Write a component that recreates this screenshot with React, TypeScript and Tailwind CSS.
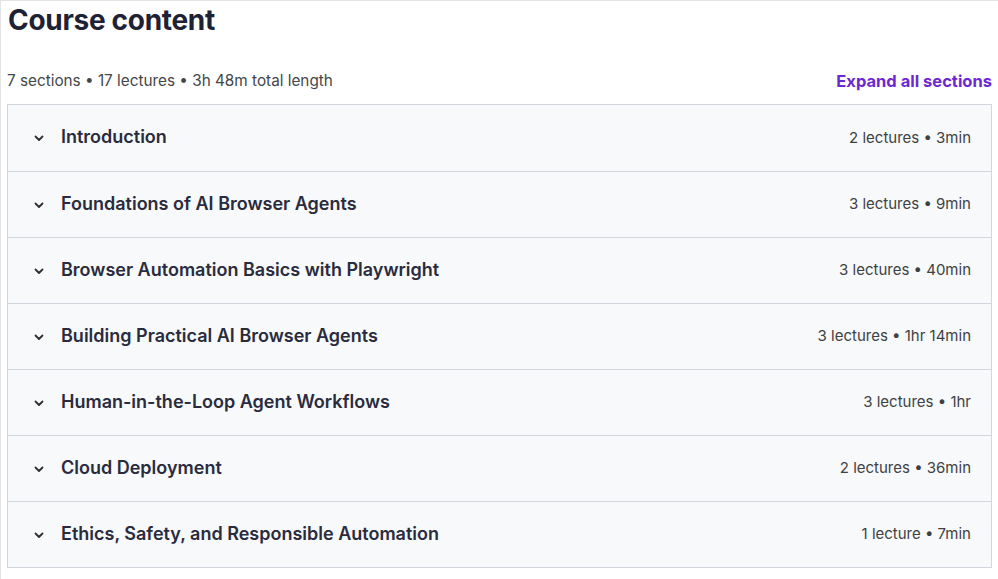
import React from "react";

type Section = { title: string; meta: string };

const sections: Section[] = [
  { title: "Introduction", meta: "2 lectures • 3min" },
  { title: "Foundations of AI Browser Agents", meta: "3 lectures • 9min" },
  { title: "Browser Automation Basics with Playwright", meta: "3 lectures • 40min" },
  { title: "Building Practical AI Browser Agents", meta: "3 lectures • 1hr 14min" },
  { title: "Human-in-the-Loop Agent Workflows", meta: "3 lectures • 1hr" },
  { title: "Cloud Deployment", meta: "2 lectures • 36min" },
  { title: "Ethics, Safety, and Responsible Automation", meta: "1 lecture • 7min" },
];

function Chevron() {
  return (
    <svg width="12" height="12" viewBox="0 0 12 12" className="shrink-0">
      <polyline
        points="2.5,4.5 6,8 9.5,4.5"
        fill="none"
        stroke="#2d2f31"
        strokeWidth="1.8"
        strokeLinecap="round"
        strokeLinejoin="round"
      />
    </svg>
  );
}

export default function App() {
  return (
    <div
      className="w-[998px] h-[579px] bg-white border-t border-l border-[#e4e4e4] text-[#2d2f31] overflow-hidden"
      style={{ fontFamily: "Inter, 'Noto Sans', sans-serif" }}
    >
      <div className="pl-[6px] pr-[6px]">
        <h2 className="text-[28px] leading-[38px] font-bold tracking-[-0.3px] pl-[1px] text-[#1f2235]">
          Course content
        </h2>
        <div className="flex items-center justify-between mt-[32px] h-[20px]">
          <span className="text-[15.3px] text-[#44474a]">
            7 sections • 17 lectures • 3h 48m total length
          </span>
          <span className="text-[16.5px] font-bold text-[#6d28d2]">Expand all sections</span>
        </div>
        <div className="mt-[13px] border border-[#d1d7dc] bg-[#f7f9fa]">
          {sections.map((s, i) => (
            <div
              key={s.title}
              className={`flex items-center justify-between h-[66px] pl-[25px] pr-[20px] ${
                i > 0 ? "border-t border-[#d1d7dc]" : ""
              }`}
            >
              <div className="flex items-center gap-[16px]">
                <Chevron />
                <span className="text-[18px] font-semibold -mt-[3px] text-[#2a2b3d]">{s.title}</span>
              </div>
              <span className="text-[15px] text-[#3e4143]">{s.meta}</span>
            </div>
          ))}
        </div>
      </div>
    </div>
  );
}
